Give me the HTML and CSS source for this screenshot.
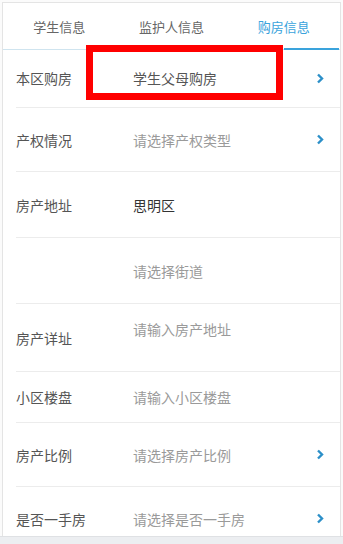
FILE: index.html
```html
<!DOCTYPE html>
<html lang="zh-CN">
<head>
  <meta charset="UTF-8">
  <title>购房信息</title>
  <meta name="viewport" content="width=device-width, initial-scale=1.0">
  <link rel="stylesheet" href="styles.css">
</head>
<body>
  <div class="card">
    <div class="tabs">
      <div class="tab">学生信息</div>
      <div class="tab">监护人信息</div>
      <div class="tab active">购房信息</div>
    </div>

    <div class="row row-first">
      <span class="label">本区购房</span>
      <span class="value chosen">学生父母购房</span>
      <svg class="arrow" width="8" height="11" viewBox="0 0 8 11"><polyline points="2,1.5 6,5.5 2,9.5" /></svg>
    </div>
    <div class="row">
      <span class="label">产权情况</span>
      <span class="value">请选择产权类型</span>
      <svg class="arrow" width="8" height="11" viewBox="0 0 8 11"><polyline points="2,1.5 6,5.5 2,9.5" /></svg>
    </div>
    <div class="row row-tall">
      <span class="label">房产地址</span>
      <span class="value filled">思明区</span>
    </div>
    <div class="row row-tall">
      <span class="label"></span>
      <span class="value">请选择街道</span>
    </div>
    <div class="row row-area">
      <span class="label">房产详址</span>
      <span class="value top">请输入房产地址</span>
    </div>
    <div class="row row-short">
      <span class="label">小区楼盘</span>
      <span class="value">请输入小区楼盘</span>
    </div>
    <div class="row">
      <span class="label">房产比例</span>
      <span class="value">请选择房产比例</span>
      <svg class="arrow" width="8" height="11" viewBox="0 0 8 11"><polyline points="2,1.5 6,5.5 2,9.5" /></svg>
    </div>
    <div class="row">
      <span class="label">是否一手房</span>
      <span class="value">请选择是否一手房</span>
      <svg class="arrow" width="8" height="11" viewBox="0 0 8 11"><polyline points="2,1.5 6,5.5 2,9.5" /></svg>
    </div>
  </div>

  <div class="mark"></div>
  <div class="footer"></div>
</body>
</html>
```

FILE: styles.css
```css
body {
  margin: 0;
  padding: 0;
  background: #fbfbfb;
  font-family: "Noto Sans CJK SC", "Noto Sans", sans-serif;
  overflow: hidden;
}
.card {
  margin: 2px 2px 0 2px;
  background: #fff;
  border: 1px solid #e4e4e4;
  border-bottom: none;
}
.tabs {
  display: flex;
  height: 46px;
  border-bottom: 1px solid #cfe4ef;
}
.tab {
  flex: 1;
  display: flex;
  align-items: center;
  justify-content: center;
  font-size: 13px;
  color: #666;
  position: relative;
}
.tab.active {
  color: #3aa3dc;
}
.tab.active::after {
  content: "";
  position: absolute;
  left: 50%;
  right: 1px;
  bottom: -1px;
  height: 2px;
  background: #3aa3dc;
}
.row {
  display: flex;
  align-items: center;
  height: 63px;
  margin-left: 13px;
  border-bottom: 1px solid #ececec;
  font-size: 14px;
}
.row-first {
  height: 57px;
  align-items: flex-start;
}
.row-first .label,
.row-first .value {
  margin-top: 18px;
}
.row-first .arrow {
  margin-top: 23px;
}
.row-tall {
  height: 65px;
}
.row-area {
  height: 67px;
}
.row-short {
  height: 50px;
}
.label {
  width: 117px;
  color: #555;
  flex-shrink: 0;
}
.value {
  flex: 1;
  color: #9a9a9a;
}
.value.chosen {
  color: #555;
}
.value.filled {
  color: #333;
}
.value.top {
  align-self: flex-start;
  margin-top: 15px;
}
.arrow {
  margin-right: 16px;
  fill: none;
  stroke: #2b8fc8;
  stroke-width: 2.4;
}
.mark {
  position: absolute;
  left: 86px;
  top: 45px;
  width: 183px;
  height: 41px;
  border: 7px solid #f00;
}
.footer {
  position: fixed;
  left: 0;
  right: 0;
  bottom: 0;
  height: 7px;
  background: #eceef1;
  border-top: 1px solid #dfe1e4;
}
```
